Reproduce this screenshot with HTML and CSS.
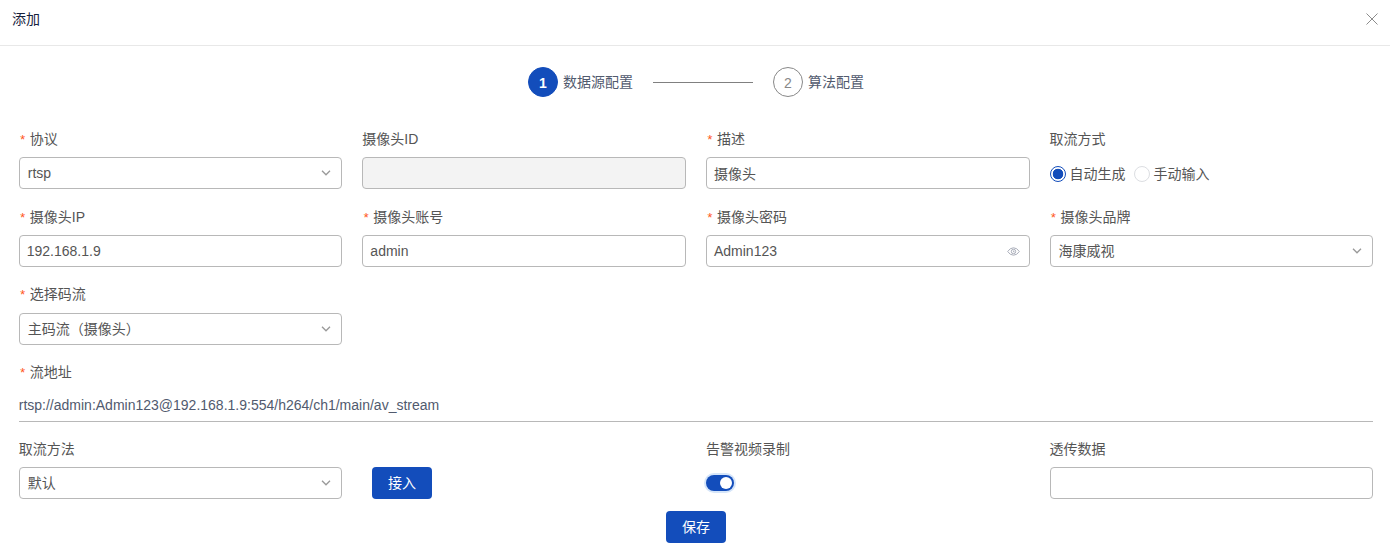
FILE: index.html
```html
<!DOCTYPE html>
<html lang="zh-CN">
<head>
<meta charset="utf-8">
<title>添加</title>
<link rel="stylesheet" href="styles.css">
</head>
<body>
<header class="header">
  <span class="title">添加</span>
  <svg class="close" viewBox="0 0 14 14"><path d="M1.5 1.5l11 11M12.5 1.5l-11 11"/></svg>
</header>
<nav class="steps">
  <div class="step active"><span class="num">1</span><span>数据源配置</span></div>
  <div class="line"></div>
  <div class="step"><span class="num">2</span><span>算法配置</span></div>
</nav>
<main class="form">
  <div class="field">
    <div class="label required">协议</div>
    <div class="control select"><span>rtsp</span><svg class="arrow" viewBox="0 0 10 10"><path d="M1 2.8l4 4 4-4"/></svg></div>
  </div>
  <div class="field">
    <div class="label">摄像头ID</div>
    <div class="control disabled"></div>
  </div>
  <div class="field">
    <div class="label required">描述</div>
    <div class="control description">摄像头</div>
  </div>
  <div class="field">
    <div class="label">取流方式</div>
    <div class="radios">
      <span class="radio checked"></span><span class="radio-text">自动生成</span>
      <span class="radio"></span><span class="radio-text">手动输入</span>
    </div>
  </div>
  <div class="field">
    <div class="label required">摄像头IP</div>
    <div class="control">192.168.1.9</div>
  </div>
  <div class="field">
    <div class="label required">摄像头账号</div>
    <div class="control">admin</div>
  </div>
  <div class="field">
    <div class="label required">摄像头密码</div>
    <div class="control"><span>Admin123</span><svg class="eye" viewBox="0 0 13 9"><path d="M.7 4.5Q3 .8 6.5.8t5.8 3.7Q10 8.2 6.5 8.2T.7 4.5z"/><circle cx="6.5" cy="4.5" r="2.2"/><path d="M6.5 3.6v1.2h1"/></svg></div>
  </div>
  <div class="field">
    <div class="label required">摄像头品牌</div>
    <div class="control select"><span>海康威视</span><svg class="arrow" viewBox="0 0 10 10"><path d="M1 2.8l4 4 4-4"/></svg></div>
  </div>
  <div class="field own-row">
    <div class="label required">选择码流</div>
    <div class="control select"><span>主码流（摄像头）</span><svg class="arrow" viewBox="0 0 10 10"><path d="M1 2.8l4 4 4-4"/></svg></div>
  </div>
  <div class="field full">
    <div class="label required">流地址</div>
    <div class="url">rtsp://admin:Admin123@192.168.1.9:554/h264/ch1/main/av_stream</div>
  </div>
  <div class="field">
    <div class="label">取流方法</div>
    <div class="control select"><span>默认</span><svg class="arrow" viewBox="0 0 10 10"><path d="M1 2.8l4 4 4-4"/></svg></div>
  </div>
  <div class="field action"><button class="button">接入</button></div>
  <div class="field">
    <div class="label">告警视频录制</div>
    <div class="switch-row"><span class="switch"><span class="knob"></span></span></div>
  </div>
  <div class="field">
    <div class="label">透传数据</div>
    <div class="control"></div>
  </div>
</main>
<footer class="footer"><button class="button">保存</button></footer>
</body>
</html>
```
FILE: styles.css
```css
* { box-sizing: border-box; }
body {
  margin: 0;
  height: 558px;
  overflow: hidden;
  background: #fff;
  color: #555;
  font: 14px/22px "Liberation Sans", "Noto Sans CJK SC", sans-serif;
}
svg { fill: none; stroke: #999; flex: none; }
.header {
  height: 46px;
  padding: 0 11px 7px 12px;
  border-bottom: 1px solid #e8e8e8;
  display: flex;
  align-items: center;
  justify-content: space-between;
}
.title { color: #17233d; }
.close { width: 14px; height: 14px; stroke: #8c8c8c; }
.steps {
  height: 82px;
  padding: 21px 0 0 2px;
  display: flex;
  align-items: flex-start;
  justify-content: center;
  gap: 20px;
  color: #515a6e;
}
.step { display: flex; align-items: center; gap: 5px; line-height: 30px; }
.num {
  width: 30px;
  height: 30px;
  border: 1px solid #888;
  border-radius: 50%;
  line-height: 30px;
  text-align: center;
  color: #888;
}
.active .num { background: #134dbb; border-color: #134dbb; color: #fff; font-weight: bold; }
.line { width: 100px; height: 1px; margin-top: 15px; background: #808080; }
.form {
  padding: 0 16.85px 0 18.75px;
  display: grid;
  grid-template-columns: repeat(4, 1fr);
  column-gap: 20px;
  row-gap: 17px;
}
.field { display: flex; flex-direction: column; gap: 7px; }
.own-row { grid-column: 1 / 2; }
.full { grid-column: 1 / -1; margin-bottom: -1px; }
.label { height: 22px; white-space: nowrap; }
.own-row .label, .full .label { line-height: 20px; }
.required::before {
  content: "*";
  color: #ff5722;
  display: inline-block;
  width: 11px;
  font-family: "Liberation Mono", monospace;
  font-size: 13px;
}
.control {
  height: 32px;
  padding: 0 8px 0 7px;
  border: 1px solid #b8b8b8;
  border-radius: 4px;
  display: flex;
  align-items: center;
  justify-content: space-between;
}
.description { padding-top: 2px; }
.select { padding: 0 10px 0 8px; }
.disabled { background: #f3f3f3; }
.arrow { width: 10px; height: 10px; stroke-width: 1.3; }
.eye { width: 13px; height: 9px; margin-right: 1px; stroke: #a9adb9; stroke-width: 1; }
.radios { height: 34px; margin-bottom: -2px; display: flex; align-items: center; }
.radio { width: 16px; height: 16px; border: 1px solid #dcdee2; border-radius: 50%; }
.checked { border-color: #134dbb; background: radial-gradient(circle, #134dbb 5px, #fff 5.6px); }
.radio-text { margin: 0 8px 0 4px; }
.url {
  height: 31px;
  border-bottom: 1px solid #b8b8b8;
  color: #515a6e;
  line-height: 29px;
}
.action { justify-content: flex-end; align-items: flex-start; padding-left: 9.65px; }
.button {
  width: 60px;
  height: 32px;
  padding: 0;
  border: 0;
  border-radius: 4px;
  background: #134dbb;
  color: #fff;
  font: inherit;
}
.switch-row { height: 32px; display: flex; align-items: center; }
.switch {
  width: 28px;
  height: 16px;
  padding: 2px;
  border-radius: 8px;
  background: #134dbb;
  box-shadow: 0 0 0 2px #d5e5f9;
  display: flex;
  justify-content: flex-end;
}
.knob { width: 12px; height: 12px; border-radius: 50%; background: #fff; }
.footer { padding: 12px 0 0 2px; display: flex; justify-content: center; }
```
